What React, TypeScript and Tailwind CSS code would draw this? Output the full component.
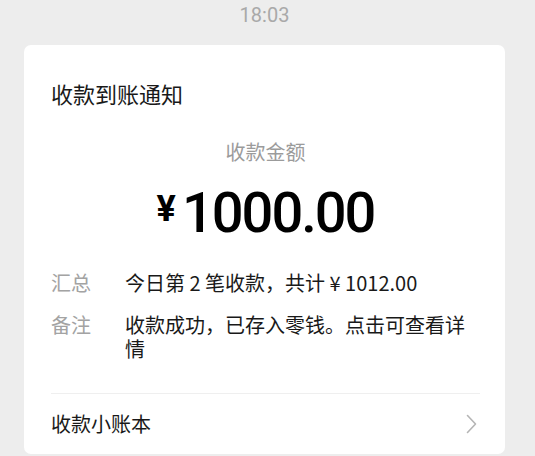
import React from "react";

const cjk = { fontFamily: '"Noto Sans CJK SC", "Noto Sans", sans-serif' };
const num = { fontFamily: 'Roboto, "Noto Sans", sans-serif' };

function Chevron() {
  return (
    <svg width="12" height="20" viewBox="0 0 12 20" fill="none" className="mr-[2px]">
      <path d="M1.5 1.5 L9.5 10 L1.5 18.5" stroke="#b5b5b5" strokeWidth="1.6" strokeLinecap="round" strokeLinejoin="round" />
    </svg>
  );
}

export default function App() {
  return (
    <div className="min-h-screen bg-[#ededed] pl-[24px]" style={cjk}>
      <div className="w-[481px]">
        {/* time stamp */}
        <div className="pt-[3px] text-center text-[20px] leading-[24px] text-[#a9a9a9]" style={num}>
          18:03
        </div>

        {/* notice card */}
        <div className="mt-[18px] rounded-[7px] bg-white pl-[27px] pr-[25px] pt-[33px]">
          <div className="text-[22px] leading-[30px] text-[#191919]">收款到账通知</div>

          <div className="mt-[30px] text-center text-[20px] leading-[28px] text-[#9b9b9b]">收款金额</div>

          <div className="mt-[15px] flex items-start justify-center text-[#000]" style={num}>
            <span className="mt-[10px] mr-[6px] text-[36px] font-bold leading-none">¥</span>
            <span className="text-[56px] font-medium leading-[64px] tracking-[-2px]">1000.00</span>
          </div>

          <div className="mt-[26px] flex flex-col gap-[18px] text-[20px] leading-[24px]">
            <div className="flex">
              <div className="w-[74px] shrink-0 text-[#a3a3a3]">汇总</div>
              <div className="flex-1 text-[#191919]">今日第 2 笔收款，共计 ¥ 1012.00</div>
            </div>
            <div className="flex">
              <div className="w-[74px] shrink-0 text-[#a3a3a3]">备注</div>
              <div className="flex-1 text-[#191919]">收款成功，已存入零钱。点击可查看详情</div>
            </div>
          </div>

          <div className="mt-[32px] border-t border-[#efefef]" />

          <div className="flex items-center justify-between pt-[18px] pb-[18px]">
            <span className="text-[20px] leading-[24px] text-[#191919]">收款小账本</span>
            <Chevron />
          </div>
        </div>
      </div>
    </div>
  );
}
